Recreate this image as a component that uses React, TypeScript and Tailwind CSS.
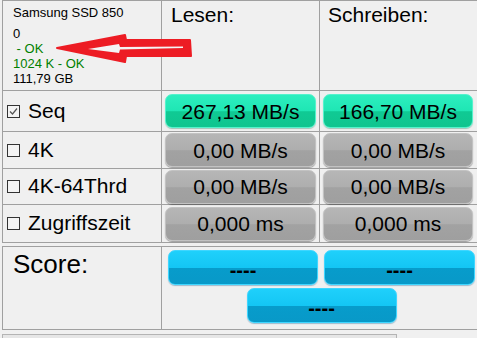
import { ReactNode } from "react";

type Tone = "green" | "gray" | "blue";

const toneClass: Record<Tone, string> = {
  green:
    "bg-[linear-gradient(to_bottom,#2deebf_0%,#1fe6b4_50%,#10ca94_52%,#0fc58f_100%)] border border-[#55f2cc] shadow-[0_1px_1px_rgba(0,120,80,0.35)]",
  gray:
    "bg-[linear-gradient(to_bottom,#b6b6b6_0%,#aeaeae_50%,#a2a2a2_52%,#9f9f9f_100%)] border border-[#c2c2c2] shadow-[0_1px_1px_rgba(0,0,0,0.35)]",
  blue:
    "bg-[linear-gradient(to_bottom,#1fd0fb_0%,#14c6f4_50%,#079ccb_52%,#0899c8_100%)] border border-[#3fd6ff] shadow-[0_1px_1px_rgba(0,90,140,0.35)]",
};

function Pill({ tone, className, children }: { tone: Tone; className: string; children: ReactNode }) {
  return (
    <div className={`flex items-center justify-center rounded-[7px] text-black ${toneClass[tone]} ${className}`}>
      {children}
    </div>
  );
}

function Checkbox({ checked }: { checked: boolean }) {
  return (
    <div className="w-[13px] h-[13px] border border-[#333] bg-[#f4f4f4] flex items-center justify-center shrink-0">
      {checked && (
        <svg width="9" height="9" viewBox="0 0 9 9">
          <path d="M1 4.5 L3.5 7 L8 1.5" fill="none" stroke="#555" strokeWidth="1.2" />
        </svg>
      )}
    </div>
  );
}

const rows = [
  { label: "Seq", checked: true, read: "267,13 MB/s", write: "166,70 MB/s", tone: "green" as Tone, h: "h-[41px]" },
  { label: "4K", checked: false, read: "0,00 MB/s", write: "0,00 MB/s", tone: "gray" as Tone, h: "h-[37px]" },
  { label: "4K-64Thrd", checked: false, read: "0,00 MB/s", write: "0,00 MB/s", tone: "gray" as Tone, h: "h-[36px]" },
  { label: "Zugriffszeit", checked: false, read: "0,000 ms", write: "0,000 ms", tone: "gray" as Tone, h: "h-[38px]" },
];

const cell = "border-r border-b border-[#a0a0a0]";

export default function App() {
  return (
    <div className="relative w-[477px] h-[338px] overflow-hidden bg-[#f0f0f0] font-['Liberation_Sans',Arial,sans-serif] leading-[1.15] text-black">
      <div className="w-[490px]">
        {/* benchmark table */}
        <div className="ml-[2px] border-l border-t border-[#a0a0a0] grid grid-cols-[159px_158px_1fr]">
          <div className={`${cell} h-[90px] pl-[10px] pt-[4px] text-[13px] leading-[15px]`}>
            <div>Samsung SSD 850</div>
            <div className="mt-[6px]">0</div>
            <div className="text-[#008000]">{"\u00a0- OK"}</div>
            <div className="text-[#008000]">1024 K - OK</div>
            <div>111,79 GB</div>
          </div>
          <div className={`${cell} h-[90px] pl-[9px] pt-[2px] text-[21px]`}>Lesen:</div>
          <div className={`${cell} h-[90px] pl-[8px] pt-[2px] text-[21px]`}>Schreiben:</div>

          {rows.map((r) => (
            <div key={r.label} className="contents">
              <div className={`${cell} ${r.h} flex items-center gap-[8px] pl-[4px] text-[21px]`}>
                <Checkbox checked={r.checked} />
                <span>{r.label}</span>
              </div>
              <div className={`${cell} ${r.h} flex items-center pl-[3px]`}>
                <Pill tone={r.tone} className="w-[151px] h-[34px] pt-[2px] text-[21px]">
                  {r.read}
                </Pill>
              </div>
              <div className={`${cell} ${r.h} flex items-center pl-[3px]`}>
                <Pill tone={r.tone} className="w-[150px] h-[34px] pt-[2px] text-[21px]">
                  {r.write}
                </Pill>
              </div>
            </div>
          ))}
        </div>

        {/* score */}
        <div className="mt-[3px] ml-[2px] border-l border-t border-b border-[#a0a0a0] h-[84px] grid grid-cols-[159px_1fr]">
          <div className="border-r border-[#a0a0a0] pl-[10px] pt-[3px] text-[26px]">Score:</div>
          <div className="pl-[6px] pt-[3px] w-[313px] flex flex-col gap-[3px]">
            <div className="flex gap-[6px]">
              <Pill tone="blue" className="w-[150px] h-[35px] pt-[5px] text-[20px] font-bold">----</Pill>
              <Pill tone="blue" className="w-[151px] h-[35px] pt-[5px] text-[20px] font-bold">----</Pill>
            </div>
            <div className="flex justify-center">
              <Pill tone="blue" className="w-[150px] h-[35px] pt-[5px] text-[20px] font-bold">----</Pill>
            </div>
          </div>
        </div>

        <div className="mt-[4px] ml-[2px] w-[395px] h-[12px] border border-[#b4b4b4] bg-[#e6e6e6]" />
      </div>

      {/* red annotation arrow */}
      <svg className="absolute left-0 top-0" width="200" height="70" viewBox="0 0 200 70">
        <path
          d="M57 48 L125 35 L126 40 L190 40 L191 56 L126 56 L125 62 Z"
          fill="#ed1c24"
          stroke="#ed1c24"
          strokeWidth="2"
          strokeLinejoin="round"
        />
        <path d="M88 49 L119 44 L120 47 L183 46.5 L183 48 L120 49.5 L119 53 Z" fill="#f4f4f4" />
      </svg>
    </div>
  );
}
